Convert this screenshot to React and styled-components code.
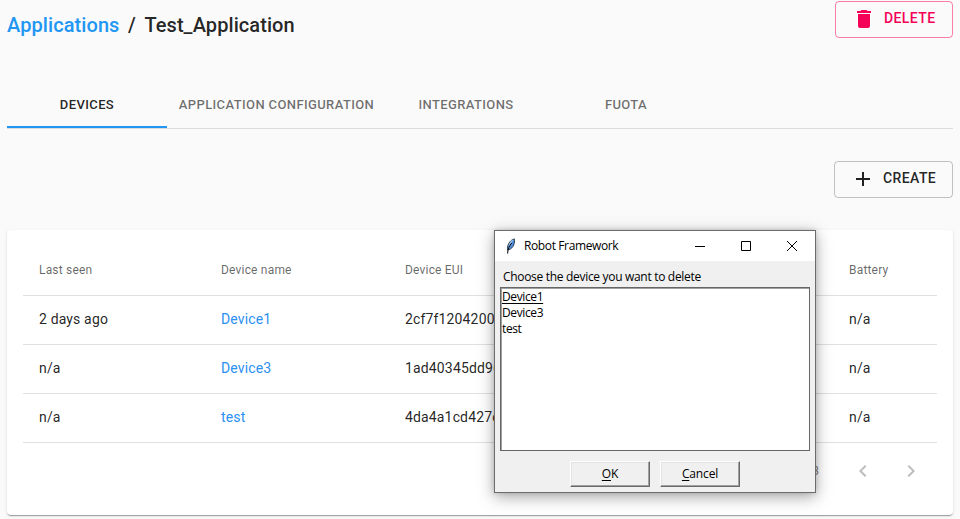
import React from "react";
import styled, { createGlobalStyle } from "styled-components";

const GlobalStyle = createGlobalStyle`
  * { box-sizing: border-box; }
  body {
    margin: 0;
    background: #fafafa;
    color: rgba(0, 0, 0, 0.87);
    font-family: Roboto, "Liberation Sans", sans-serif;
    overflow: hidden;
  }
`;

const Page = styled.main`
  position: relative;
  width: 960px;
  height: 519px;
  padding: 1px 7px 0;
  overflow: hidden;
`;

const Header = styled.header`
  display: flex;
  justify-content: space-between;
  align-items: flex-start;
  height: 79px;
`;

const Breadcrumb = styled.h1`
  display: flex;
  gap: 8.5px;
  margin: 8px 0 0;
  font-size: 20px;
  line-height: 32px;
  font-weight: 500;
  letter-spacing: 0.08px;
`;

const Crumb = styled.a`
  color: #2196f3;
`;

const OutlinedButton = styled.button`
  display: flex;
  align-items: center;
  gap: 8px;
  width: ${(p) => (p.$danger ? 118 : 119)}px;
  height: 37px;
  padding: 0 0 1px 16px;
  border: 1px solid ${(p) => (p.$danger ? "rgba(245,0,87,.5)" : "rgba(0,0,0,.23)")};
  border-radius: 4px;
  background: transparent;
  color: ${(p) => (p.$danger ? "#f50057" : "rgba(0,0,0,.87)")};
  font: 500 14px/24px Roboto, sans-serif;
  letter-spacing: 0.4px;
  white-space: nowrap;

  svg {
    flex: none;
    width: 24px;
    height: 24px;
    fill: currentColor;
  }
`;

const ButtonLabel = styled.span`
  padding-bottom: 2px;
`;

const Tabs = styled.nav`
  display: flex;
  height: 49px;
  border-bottom: 1px solid #dcdcdc;
`;

const Tab = styled.button`
  width: ${(p) => p.$width || 160}px;
  height: 48px;
  padding: 3px 0 0;
  border: 0;
  border-bottom: 2px solid ${(p) => (p.$active ? "#2196f3" : "transparent")};
  background: none;
  color: ${(p) => (p.$active ? "rgba(0,0,0,.87)" : "rgba(0,0,0,.57)")};
  font: 500 13px/20px Roboto, sans-serif;
  letter-spacing: 0.38px;
  white-space: nowrap;
`;

const Actions = styled.div`
  display: flex;
  justify-content: flex-end;
  height: 101px;
  padding-top: 32px;
`;

const Card = styled.section`
  height: 285px;
  padding: 16px;
  border-radius: 4px;
  background: #fff;
  box-shadow: 0 2px 1px -1px rgba(0, 0, 0, 0.2), 0 1px 1px rgba(0, 0, 0, 0.14),
    0 1px 3px rgba(0, 0, 0, 0.12);
`;

const Row = styled.div`
  display: grid;
  grid-template-columns: 182px 184px 444px 104px;
  align-items: center;
  height: ${(p) => (p.$head ? 50 : 49)}px;
  padding-bottom: 2px;
  border-bottom: 1px solid #e0e0e0;
  color: ${(p) => (p.$head ? "rgba(0,0,0,.6)" : "rgba(0,0,0,.87)")};
  font-size: ${(p) => (p.$head ? 12 : 14)}px;
  font-weight: 400;
  letter-spacing: ${(p) => (p.$head ? 0.19 : 0.15)}px;
`;

const Cell = styled.span`
  padding-left: 16px;
  color: ${(p) => (p.$link ? "#2b90f2" : "inherit")};
`;

const Pagination = styled.footer`
  display: flex;
  align-items: center;
  justify-content: flex-end;
  height: 56px;
  padding: 0 2px 1px 0;
  color: rgba(0, 0, 0, 0.54);
  font-size: 12px;
`;

const Range = styled.span`
  margin-right: 20px;
`;

const PageButton = styled.button`
  display: grid;
  place-items: center;
  width: 48px;
  height: 48px;
  padding: 0;
  border: 0;
  background: none;
  color: rgba(0, 0, 0, 0.26);

  svg { width: 24px; height: 24px; fill: currentColor; }
`;

const Dialog = styled.div`
  position: absolute;
  left: 494px;
  top: 230px;
  width: 322px;
  height: 263px;
  border: 1px solid #6c6c6c;
  background: #f0f0f0;
  color: #000;
  font: 12px/16px "Open Sans", "Noto Sans", sans-serif;
  box-shadow: 0 4px 15px rgba(0, 0, 0, 0.34), 0 0 5px rgba(0, 0, 0, 0.15);
`;

const TitleBar = styled.div`
  display: flex;
  align-items: center;
  height: 30px;
  padding-left: 8px;
  background: #fff;
`;

const Title = styled.span`
  flex: 1;
  margin-left: 5px;
  letter-spacing: -0.38px;
  white-space: nowrap;
`;

const WindowControl = styled.button`
  display: grid;
  place-items: center;
  width: 46px;
  height: 30px;
  padding: 0 0 1px;
  border: 0;
  background: none;
`;

const Prompt = styled.div`
  height: 26px;
  padding: 8px 0 0 8px;
  letter-spacing: -0.31px;
  white-space: nowrap;
`;

const ListBox = styled.div`
  width: 310px;
  height: 164px;
  margin-left: 5px;
  border: 1px solid #666;
  background: #fff;
  box-shadow: inset 1px 1px 0 #a0a0a0;
  padding: 1px 0 0 1px;
`;

const Option = styled.div`
  height: 16px;
  letter-spacing: -0.38px;
  text-decoration: ${(p) => (p.$focused ? "underline" : "none")};
  text-underline-offset: 2px;
`;

const DialogActions = styled.div`
  display: flex;
  justify-content: center;
  gap: 10px;
  padding: 10px 0 0;
`;

const DialogButton = styled.button`
  width: 80px;
  height: 26px;
  padding: 0;
  border: 1px solid;
  border-color: #fff #696969 #696969 #fff;
  background: #f0f0f0;
  box-shadow: inset -1px -1px #a0a0a0, inset 1px 1px #e3e3e3;
  color: #000;
  font: 12px/16px "Open Sans", "Noto Sans", sans-serif;
  letter-spacing: -0.15px;

  u { text-underline-offset: 2px; }
`;

const devices = [
  ["2 days ago", "Device1", "2cf7f1204200", "n/a"],
  ["n/a", "Device3", "1ad40345dd96", "n/a"],
  ["n/a", "test", "4da4a1cd427e", "n/a"],
];

function Feather() {
  return (
    <svg width="16" height="16" viewBox="0 0 16 16">
      <path d="M4.7 12.2C3.6 8.3 6.2 2.2 11.3.9c.9 4-.9 9.2-5.3 10.8z" fill="#4b8ddc" stroke="#26303c" strokeWidth=".9" />
      <path d="M6 9.5C6.4 6.3 7.6 3.8 9.6 2.2" fill="none" stroke="#9cc8f0" strokeWidth="1.3" />
      <path d="M4.6 15.5c.1-4 1.5-8 4.3-10.6" fill="none" stroke="#000" strokeWidth="1" />
    </svg>
  );
}

export default function App() {
  return (
    <>
      <GlobalStyle />
      <Page>
        <Header>
          <Breadcrumb>
            <Crumb>Applications</Crumb>
            <span>/</span>
            <span>Test_Application</span>
          </Breadcrumb>
          <OutlinedButton $danger>
            <svg viewBox="0 0 24 24"><path d="M6 19c0 1.1.9 2 2 2h8c1.1 0 2-.9 2-2V7H6v12zM19 4h-3.5l-1-1h-5l-1 1H5v2h14V4z" /></svg>
            <ButtonLabel>DELETE</ButtonLabel>
          </OutlinedButton>
        </Header>
        <Tabs>
          <Tab $active>DEVICES</Tab>
          <Tab $width={219}>APPLICATION CONFIGURATION</Tab>
          <Tab>INTEGRATIONS</Tab>
          <Tab>FUOTA</Tab>
        </Tabs>
        <Actions>
          <OutlinedButton>
            <svg viewBox="0 0 24 24"><path d="M19 13h-6v6h-2v-6H5v-2h6V5h2v6h6v2z" /></svg>
            <ButtonLabel>CREATE</ButtonLabel>
          </OutlinedButton>
        </Actions>
        <Card>
          <Row $head>
            <Cell>Last seen</Cell>
            <Cell>Device name</Cell>
            <Cell>Device EUI</Cell>
            <Cell>Battery</Cell>
          </Row>
          {devices.map(([seen, name, eui, battery]) => (
            <Row key={name}>
              <Cell>{seen}</Cell>
              <Cell $link>{name}</Cell>
              <Cell>{eui}</Cell>
              <Cell>{battery}</Cell>
            </Row>
          ))}
          <Pagination>
            <Range>3</Range>
            <PageButton aria-label="Previous page">
              <svg viewBox="0 0 24 24"><path d="M15.41 7.41L14 6l-6 6 6 6 1.41-1.41L10.83 12z" /></svg>
            </PageButton>
            <PageButton aria-label="Next page">
              <svg viewBox="0 0 24 24"><path d="M10 6L8.59 7.41 13.17 12l-4.58 4.59L10 18l6-6z" /></svg>
            </PageButton>
          </Pagination>
        </Card>
        <Dialog role="dialog">
          <TitleBar>
            <Feather />
            <Title>Robot Framework</Title>
            <WindowControl aria-label="Minimize">
              <svg width="10" height="10"><path d="M0 5.5h10" stroke="#000" /></svg>
            </WindowControl>
            <WindowControl aria-label="Maximize">
              <svg width="10" height="10"><path d="M.5.5h9v9h-9z" fill="none" stroke="#000" /></svg>
            </WindowControl>
            <WindowControl aria-label="Close">
              <svg width="10" height="10"><path d="M0 0l10 10M10 0L0 10" stroke="#000" /></svg>
            </WindowControl>
          </TitleBar>
          <Prompt>Choose the device you want to delete</Prompt>
          <ListBox>
            <Option $focused>Device1</Option>
            <Option>Device3</Option>
            <Option>test</Option>
          </ListBox>
          <DialogActions>
            <DialogButton><u>O</u>K</DialogButton>
            <DialogButton><u>C</u>ancel</DialogButton>
          </DialogActions>
        </Dialog>
      </Page>
    </>
  );
}
